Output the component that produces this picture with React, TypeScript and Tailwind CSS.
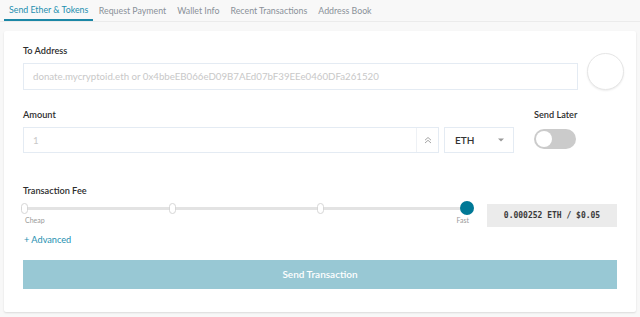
import { useState } from "react";

const tabs = [
  "Send Ether & Tokens",
  "Request Payment",
  "Wallet Info",
  "Recent Transactions",
  "Address Book",
];

const Tabs = () => (
  <nav className="flex h-[22px] items-stretch border-b border-[#ebebeb] px-1">
    {tabs.map((t, i) => (
      <div
        key={t}
        className={
          i === 0
            ? "flex items-center border-b-2 border-[#1b87a6] px-[5px] text-[8.8px] text-[#1e8fb0]"
            : "flex items-center px-[5.5px] text-[8.8px] text-[#8a9199]"
        }
      >
        {t}
      </div>
    ))}
  </nav>
);

const Label = ({ children }: { children: React.ReactNode }) => (
  <div className="text-[9.2px] leading-[12px] font-semibold text-[#2d2d2d]">{children}</div>
);

// knob lefts in px along the 444px track
const stops = [-2, 146, 294];

const FeeSlider = () => (
  <div className="w-[449px]">
    <div className="relative h-[14px]">
      <div className="absolute top-[6px] left-0 h-[3px] w-[444px] bg-[#e3e3e3]" />
      {stops.map((s) => (
        <div
          key={s}
          className="absolute top-[2px] h-[11px] w-[7px] rounded-full border border-[#d6d6d6] bg-white"
          style={{ left: s }}
        />
      ))}
      <div className="absolute top-0 left-[437px] h-[14px] w-[14px] rounded-full bg-[#007896]" />
    </div>
    <div className="mt-[1px] flex w-[446px] justify-between text-[7px] leading-[9px] text-[#9a9a9a]">
      <span className="ml-[2px]">Cheap</span>
      <span>Fast</span>
    </div>
  </div>
);

export default function App() {
  const [later] = useState(false);
  return (
    <div className="h-[317px] w-[640px] bg-[#f8f8f8] font-['Lato',sans-serif]">
      <Tabs />
      <div className="mx-1 mt-[9px] h-[281px] rounded-[2px] bg-white px-[19px] pt-[14px] shadow-[0_1px_2px_rgba(0,0,0,0.12)]">
        <Label>To Address</Label>
        <div className="mr-[-7px] flex items-start gap-[9px]">
          <div className="mt-[6px] flex h-[27px] flex-1 items-center border border-[#e4ebf3] px-[9px] text-[9.7px] text-[#c8c8c8]">
            donate.mycryptoid.eth or 0x4bbeEB066eD09B7AEd07bF39EEe0460DFa261520
          </div>
          <div className="mt-[-4px] h-[37px] w-[37px] rounded-full border border-[#e6e6e6] bg-white shadow-[0_1px_2px_rgba(0,0,0,0.08)]" />
        </div>

        <div className="mt-[19px] flex gap-5">
          <div className="flex-1">
            <Label>Amount</Label>
            <div className="mt-[6px] flex h-[26px] gap-[5px]">
              <div className="flex flex-1 border border-[#e4ebf3]">
                <div className="flex flex-1 items-center px-[9px] text-[9.7px] text-[#c8c8c8]">1</div>
                <div className="flex w-[22px] items-center justify-center border-l border-[#eef1f5]">
                  <svg width="8" height="8" viewBox="0 0 8 8" fill="none" stroke="#a5a5a5" strokeWidth="1">
                    <path d="M1 4.2 4 1.5 7 4.2M1 7 4 4.3 7 7" />
                  </svg>
                </div>
              </div>
              <div className="flex w-[70px] items-center justify-between border border-[#e4ebf3] pr-[9px] pl-[10px] text-[10px] font-semibold text-[#333]">
                <span>ETH</span>
                <svg width="6" height="4" viewBox="0 0 6 4">
                  <path d="M0 0.5h6L3 3.5z" fill="#999" />
                </svg>
              </div>
            </div>
          </div>
          <div className="w-[83px]">
            <Label>Send Later</Label>
            <div
              className={`mt-[8px] flex h-[20px] w-[42px] items-center rounded-full p-[2px] ${
                later ? "justify-end bg-[#007896]" : "justify-start bg-[#cbcbcb]"
              }`}
            >
              <div className="h-[16px] w-[16px] rounded-full bg-white" />
            </div>
          </div>
        </div>

        <div className="mt-[32px]">
          <Label>Transaction Fee</Label>
          <div className="mt-[4px] flex items-start justify-between">
            <FeeSlider />
            <div className="mt-[3px] flex h-[23px] w-[130px] items-center justify-center bg-[#ebebeb] font-['DejaVu_Sans_Mono',monospace] text-[8px] font-bold text-[#3a3a3a]">
              0.000252 ETH / $0.05
            </div>
          </div>
        </div>

        <div className="mt-[7px] ml-[1px] text-[9.2px] leading-[12px] text-[#1e8fb0]">+ Advanced</div>

        <button className="mt-[14px] flex h-[29px] w-full items-center justify-center bg-[#98c8d4] text-[10px] font-semibold text-white">
          Send Transaction
        </button>
      </div>
    </div>
  );
}
